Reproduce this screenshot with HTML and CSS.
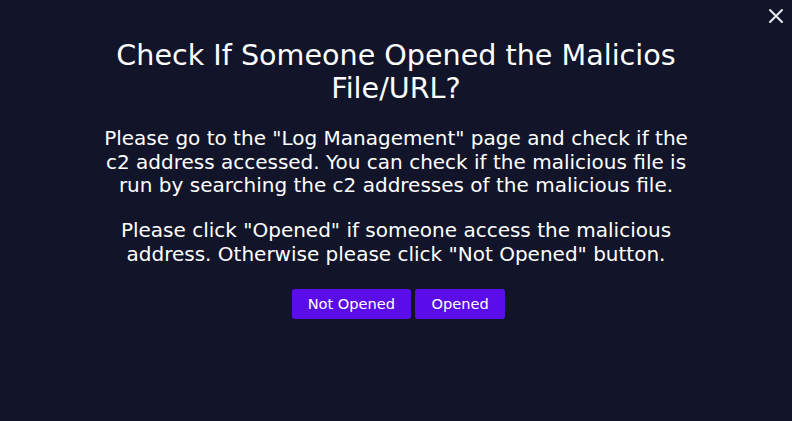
FILE: index.html
```html
<!DOCTYPE html>
<html>
<head>
<meta charset="utf-8">
<link rel="stylesheet" href="styles.css">
</head>
<body>
<div class="modal">
  <button class="close" aria-label="Close">
    <svg width="16" height="16" viewBox="0 0 16 16"><path d="M2 2L14 14M14 2L2 14" stroke="#e8eaf2" stroke-width="2" stroke-linecap="round"/></svg>
  </button>
  <div class="content">
    <h1 class="title">Check If Someone Opened the Malicios<br>File/URL?</h1>
    <p class="text">Please go to the "Log Management" page and check if the<br>c2 address accessed. You can check if the malicious file is<br>run by searching the c2 addresses of the malicious file.</p>
    <p class="text">Please click "Opened" if someone access the malicious<br>address. Otherwise please click "Not Opened" button.</p>
    <div class="actions">
      <button class="btn">Not Opened</button>
      <button class="btn btn-wide">Opened</button>
    </div>
  </div>
</div>
</body>
</html>
```
FILE: styles.css
```css
html, body {
  margin: 0;
  padding: 0;
  height: 100%;
  background: #12152a;
}
body {
  font-family: "DejaVu Sans", sans-serif;
  color: #ffffff;
}
.modal {
  position: relative;
  height: 100%;
}
.close {
  position: absolute;
  top: 8px;
  right: 8px;
  background: none;
  border: 0;
  padding: 0;
  width: 16px;
  height: 16px;
  cursor: pointer;
}
.content {
  display: flex;
  flex-direction: column;
  align-items: center;
  text-align: center;
  padding-top: 39px;
}
.title {
  margin: 0 0 22px;
  font-size: 28.6px;
  font-weight: 400;
  line-height: 33px;
}
.text {
  margin: 0 0 21px;
  font-size: 20px;
  line-height: 23.7px;
}
.actions {
  display: flex;
  gap: 4px;
  margin-top: 1px;
  margin-left: 5px;
}
.btn {
  background: #5a0de8;
  color: #fff;
  border: 0;
  border-radius: 3px;
  height: 30px;
  padding: 0 16px;
  font-family: inherit;
  font-size: 14.6px;
}
.btn-wide {
  padding: 0 16.5px;
}
```
